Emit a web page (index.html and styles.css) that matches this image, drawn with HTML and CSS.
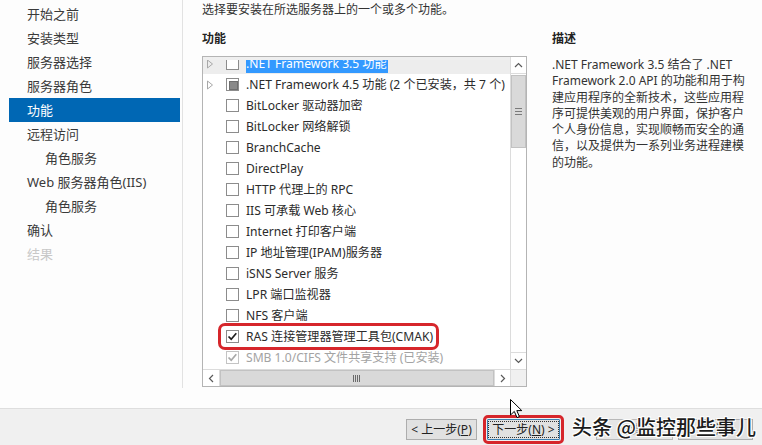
FILE: index.html
```html
<!DOCTYPE html>
<html lang="zh-CN">
<head>
<meta charset="utf-8">
<link rel="stylesheet" href="styles.css">
</head>
<body>
<div class="window">
  <div class="top">
    <nav class="nav">
      <div class="nav-item">开始之前</div>
      <div class="nav-item">安装类型</div>
      <div class="nav-item">服务器选择</div>
      <div class="nav-item">服务器角色</div>
      <div class="nav-item active">功能</div>
      <div class="nav-item">远程访问</div>
      <div class="nav-item sub">角色服务</div>
      <div class="nav-item">Web 服务器角色(IIS)</div>
      <div class="nav-item sub">角色服务</div>
      <div class="nav-item">确认</div>
      <div class="nav-item disabled">结果</div>
    </nav>
    <main class="main">
      <p class="intro">选择要安装在所选服务器上的一个或多个功能。</p>
      <div class="cols">
        <section class="features">
          <h2 class="heading">功能</h2>
          <div class="listbox">
            <div class="list-area">
              <div class="rows">
                <div class="rows-inner">
                  <div class="row current">
                    <svg class="exp" viewBox="0 0 8 10"><polygon points="1.5,1 6.5,5 1.5,9"/></svg>
                    <span class="cb"></span>
                    <span class="label"><span class="sel">.NET Framework 3.5 功能</span></span>
                  </div>
                  <div class="row">
                    <svg class="exp" viewBox="0 0 8 10"><polygon points="1.5,1 6.5,5 1.5,9"/></svg>
                    <span class="cb partial"></span>
                    <span class="label">.NET Framework 4.5 功能 (2 个已安装，共 7 个)</span>
                  </div>
                  <div class="row"><span class="noexp"></span><span class="cb"></span><span class="label">BitLocker 驱动器加密</span></div>
                  <div class="row"><span class="noexp"></span><span class="cb"></span><span class="label">BitLocker 网络解锁</span></div>
                  <div class="row"><span class="noexp"></span><span class="cb"></span><span class="label">BranchCache</span></div>
                  <div class="row"><span class="noexp"></span><span class="cb"></span><span class="label">DirectPlay</span></div>
                  <div class="row"><span class="noexp"></span><span class="cb"></span><span class="label">HTTP 代理上的 RPC</span></div>
                  <div class="row"><span class="noexp"></span><span class="cb"></span><span class="label">IIS 可承载 Web 核心</span></div>
                  <div class="row"><span class="noexp"></span><span class="cb"></span><span class="label">Internet 打印客户端</span></div>
                  <div class="row"><span class="noexp"></span><span class="cb"></span><span class="label">IP 地址管理(IPAM)服务器</span></div>
                  <div class="row"><span class="noexp"></span><span class="cb"></span><span class="label">iSNS Server 服务</span></div>
                  <div class="row"><span class="noexp"></span><span class="cb"></span><span class="label">LPR 端口监视器</span></div>
                  <div class="row"><span class="noexp"></span><span class="cb"></span><span class="label">NFS 客户端</span></div>
                  <div class="row">
                    <span class="noexp"></span>
                    <span class="mark">
                      <span class="cb"><svg viewBox="0 0 13 13"><path d="M2.5 6.5 L5.2 9.2 L10.3 3.2"/></svg></span>
                      <span class="label">RAS 连接管理器管理工具包(CMAK)</span>
                    </span>
                  </div>
                  <div class="row disabled">
                    <span class="noexp"></span>
                    <span class="cb"><svg viewBox="0 0 13 13"><path d="M2.5 6.5 L5.2 9.2 L10.3 3.2"/></svg></span>
                    <span class="label">SMB 1.0/CIFS 文件共享支持 (已安装)</span>
                  </div>
                  <div class="row disabled"><span class="noexp"></span><span class="cb"></span><span class="label">SMTP 服务器</span></div>
                </div>
              </div>
              <div class="vscroll">
                <div class="sbtn"><svg viewBox="0 0 9 6"><path d="M1 5 L4.5 1.5 L8 5"/></svg></div>
                <div class="vtrack">
                  <div class="vthumb"><span class="grip-h"></span></div>
                </div>
                <div class="sbtn"><svg viewBox="0 0 9 6"><path d="M1 1 L4.5 4.5 L8 1"/></svg></div>
              </div>
            </div>
            <div class="hscroll">
              <div class="sbtn h"><svg viewBox="0 0 6 9"><path d="M5 1 L1.5 4.5 L5 8"/></svg></div>
              <div class="htrack"><div class="hthumb"><span class="grip-v"></span></div></div>
              <div class="sbtn h right"><svg viewBox="0 0 6 9"><path d="M1 1 L4.5 4.5 L1 8"/></svg></div>
              <div class="corner"></div>
            </div>
          </div>
        </section>
        <section class="desc">
          <h2 class="heading">描述</h2>
          <p class="desc-text">.NET Framework 3.5 结合了 .NET<br>Framework 2.0 API 的功能和用于构<br>建应用程序的全新技术，这些应用程<br>序可提供美观的用户界面，保护客户<br>个人身份信息，实现顺畅而安全的通<br>信，以及提供为一系列业务进程建模<br>的功能。</p>
        </section>
      </div>
    </main>
  </div>
  <footer class="footer">
    <button class="btn prev">&lt; 上一步(<u>P</u>)</button>
    <button class="btn next"><span class="focus">下一步(<u>N</u>) &gt;</span></button>
    <button class="btn install" disabled>安装(<u>I</u>)</button>
    <button class="btn cancel">取消</button>
  </footer>
  <div class="watermark">头条 @监控那些事儿</div>
  <svg class="cursor" viewBox="0 0 13 20"><path d="M0.5 0.5 L0.5 16 L4.3 12.4 L7 18.6 L9.4 17.6 L6.8 11.6 L11.8 11.6 Z"/></svg>
</div>
</body>
</html>
```

FILE: styles.css
```css
* { box-sizing: border-box; }
html, body { margin: 0; padding: 0; }
body {
  width: 762px;
  height: 445px;
  overflow: hidden;
  background: #fdfdfd;
  font-family: "Noto Sans", "Noto Sans CJK SC", sans-serif;
  color: #2b2b2b;
}
.window {
  position: relative;
  width: 762px;
  height: 445px;
  display: flex;
  flex-direction: column;
  background: #fdfdfd;
}
.top { height: 408px; display: flex; }

.nav {
  width: 183px;
  height: 388px;
  padding: 2px 2px 0 9px;
  border-right: 1px solid #e2e2e2;
  font-size: 13px;
}
.nav-item {
  height: 24px;
  line-height: 24px;
  padding-left: 18px;
  color: #3a3a3a;
  white-space: nowrap;
}
.nav-item.sub { padding-left: 36px; }
.nav-item.active { background: #0067b4; color: #fff; }
.nav-item.disabled { color: #c8c8c8; }

.main { flex: 1; padding: 2px 0 0 19px; }
.intro { margin: 0; font-size: 12px; line-height: 16px; color: #333; }
.cols { display: flex; margin-top: 13px; }
.features { width: 325px; flex: none; }
.heading { margin: 0; font-size: 12px; font-weight: bold; line-height: 16px; color: #222; }

.listbox {
  margin-top: 9px;
  width: 325px;
  height: 331px;
  border: 1px solid #b4b4b4;
  background: #fff;
  display: flex;
  flex-direction: column;
}
.list-area { height: 312px; display: flex; }
.rows { flex: 1; overflow: hidden; border-top: 3px solid #efefef; }
.rows-inner { margin-top: -7px; }
.row {
  height: 21px;
  display: flex;
  align-items: center;
  padding-left: 3px;
  font-size: 12.1px;
  white-space: nowrap;
  color: #2b2b2b;
}
.row.current { background: #ededed; }
.exp { width: 8px; height: 10px; flex: none; }
.exp polygon { fill: none; stroke: #a8a8a8; stroke-width: 1; }
.noexp { width: 8px; flex: none; }
.cb {
  width: 13px;
  height: 13px;
  flex: none;
  margin-left: 12px;
  border: 1px solid #8c8c8c;
  background: #fff;
  position: relative;
}
.cb svg { position: absolute; left: -1px; top: -1px; width: 13px; height: 13px; }
.cb path { fill: none; stroke: #1e1e1e; stroke-width: 1.7; }
.cb.partial::after {
  content: "";
  position: absolute;
  left: 2px; top: 2px;
  width: 7px; height: 7px;
  background: #8a8a8a;
  border: 1px solid #6f6f6f;
}
.label { margin-left: 7px; line-height: 15px; }
.sel { background: #3399ff; color: #fff; padding: 0 1px 1px 0; }
.row.disabled { color: #a3a3a3; }
.row.disabled .cb { border-color: #c4c4c4; }
.row.disabled .cb path { stroke: #a8a8a8; }
.mark {
  display: inline-flex;
  align-items: center;
  margin-left: 7px;
  height: 21px;
  padding: 0 3px 0 5px;
  outline: 3px solid #d6262b;
  border-radius: 4px;
}
.mark .cb { margin-left: 0; }

.vscroll {
  width: 16px;
  flex: none;
  display: flex;
  flex-direction: column;
  border-left: 1px solid #dcdcdc;
  background: #fff;
}
.sbtn {
  height: 17px;
  flex: none;
  display: flex;
  align-items: center;
  justify-content: center;
  background: #fff;
}
.vscroll .sbtn:first-child { border-bottom: 1px solid #dcdcdc; }
.vscroll .sbtn:last-child { border-top: 1px solid #dcdcdc; }
.sbtn svg { width: 9px; height: 6px; }
.sbtn path { fill: none; stroke: #5a5a5a; stroke-width: 1.2; }
.vtrack { flex: 1; padding-top: 1px; }
.vthumb {
  height: 73px;
  background: #d9d9d9;
  border: 1px solid #c2c2c2;
  display: flex;
  align-items: center;
  justify-content: center;
}
.grip-h {
  width: 7px;
  height: 7px;
  background: repeating-linear-gradient(to bottom, #7a7a7a 0 1px, transparent 1px 3px);
}

.hscroll {
  height: 17px;
  flex: none;
  display: flex;
  border-top: 1px solid #dcdcdc;
}
.sbtn.h { width: 17px; height: 16px; border-right: 1px solid #dcdcdc; }
.sbtn.h.right { border-right: 1px solid #dcdcdc; border-left: 1px solid #dcdcdc; }
.sbtn.h svg { width: 6px; height: 9px; }
.htrack { flex: 1; background: #fff; }
.hthumb {
  height: 16px;
  background: #d9d9d9;
  border: 1px solid #c2c2c2;
  display: flex;
  align-items: center;
  justify-content: center;
}
.grip-v {
  width: 8px;
  height: 7px;
  background: repeating-linear-gradient(to right, #6a6a6a 0 1px, transparent 1px 2px);
}
.corner { width: 15px; background: #f0f0f0; }

.desc { margin-left: 25px; width: 205px; }
.desc-text {
  margin: 10px 0 0;
  font-size: 12px;
  line-height: 16.3px;
  color: #333;
  white-space: nowrap;
}

.footer {
  height: 37px;
  background: #f0f0f0;
  border-top: 1px solid #dedede;
  display: flex;
  align-items: flex-start;
  justify-content: flex-end;
  padding: 10px 9px 0 0;
}
.btn {
  height: 21px;
  font-family: "Noto Sans", "Noto Sans CJK SC", sans-serif;
  font-size: 12px;
  color: #222;
  background: #e1e1e1;
  border: 1px solid #adadad;
  padding: 0;
  display: flex;
  align-items: center;
  justify-content: center;
  line-height: 15px;
}
.btn u { text-decoration: underline; }
.prev { width: 71px; margin-right: 10px; }
.next {
  width: 73px;
  margin-right: 36px;
  border-color: #3c7fb1;
  outline: 3px solid #d6262b;
  outline-offset: 1px;
  border-radius: 1px;
}
.next .focus {
  border: 1px dotted #333;
  padding: 1px 3px;
  line-height: 13px;
}
.install { width: 77px; margin-right: 5px; color: #9c9c9c; border-color: #b9b9b9; background: #e6e6e6; }
.cancel { width: 75px; }

.watermark {
  position: absolute;
  left: 572px;
  top: 414px;
  font-family: "Noto Sans CJK SC", sans-serif;
  font-size: 20px;
  font-weight: 500;
  line-height: 26px;
  color: #1c1c1c;
  white-space: nowrap;
  text-shadow: 1px 1px 0 #fff, -1px -1px 0 #fff, 1px -1px 0 #fff, -1px 1px 0 #fff, 0 1px 0 #fff, 0 -1px 0 #fff;
}
.cursor {
  position: absolute;
  left: 510px;
  top: 399px;
  width: 13px;
  height: 20px;
}
.cursor path { fill: #fff; stroke: #000; stroke-width: 1; }
```
